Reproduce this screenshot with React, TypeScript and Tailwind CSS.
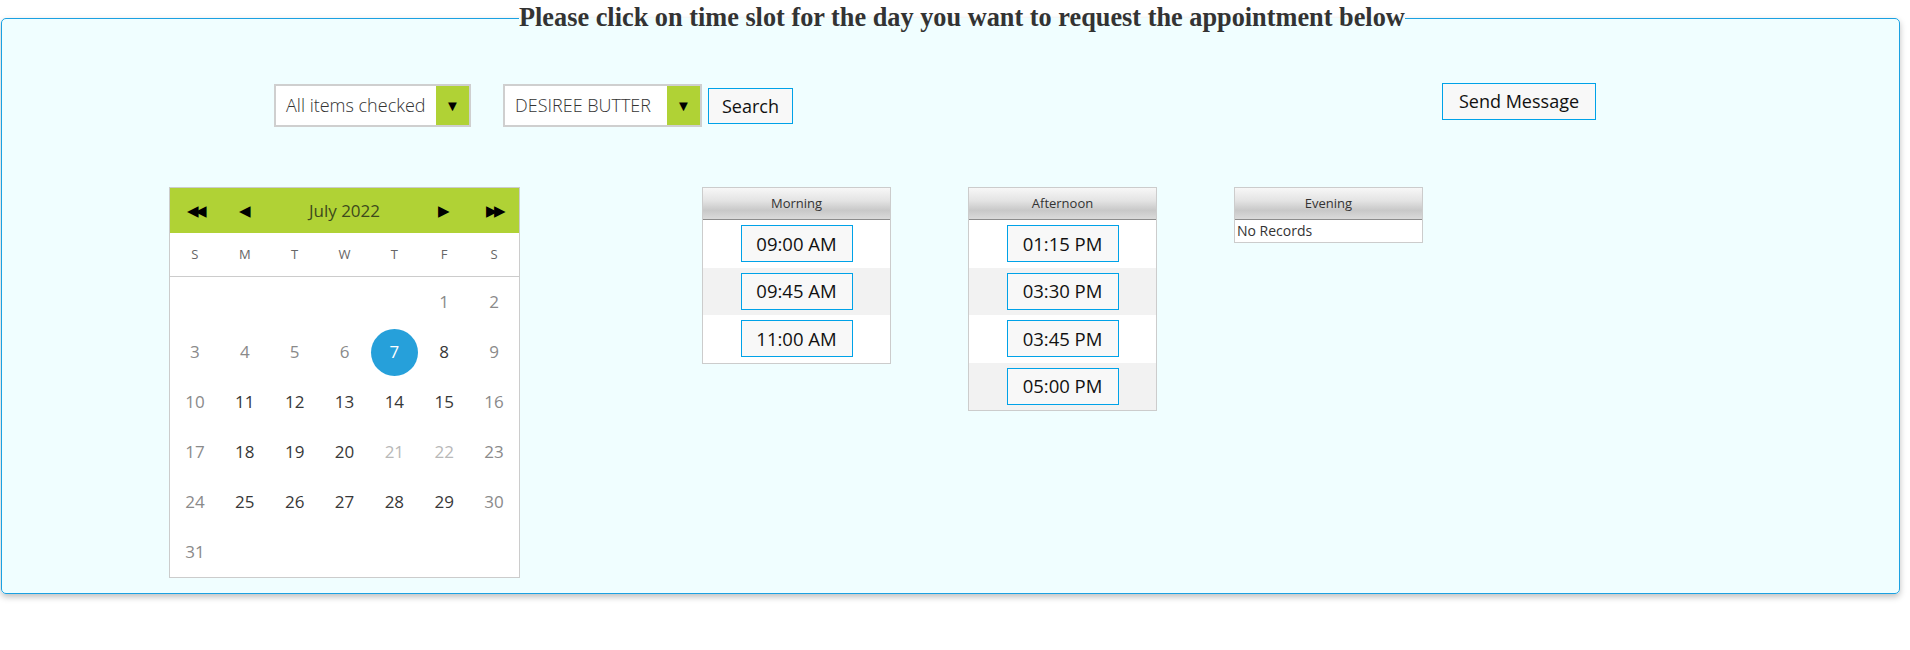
import React from 'react';

const days: (number | null)[] = [
  null, null, null, null, null, 1, 2,
  3, 4, 5, 6, 7, 8, 9,
  10, 11, 12, 13, 14, 15, 16,
  17, 18, 19, 20, 21, 22, 23,
  24, 25, 26, 27, 28, 29, 30,
  31, null, null, null, null, null, null,
];

const dayColor = (d: number, i: number) => {
  if (d === 21 || d === 22) return 'text-[#b8b8b8]';
  if (d < 7) return 'text-[#8a8a8a]';
  const col = i % 7;
  if (col === 0 || col === 6) return 'text-[#8a8a8a]';
  return 'text-[#383838]';
};

const Dropdown = ({ label, width }: { label: string; width: string }) => (
  <div className={`flex h-[43px] border-2 border-[#cfcfcf] bg-white ${width}`}>
    <div className="flex flex-1 items-center pl-[10px] text-[18px] font-light text-[#333] whitespace-nowrap overflow-hidden">
      {label}
    </div>
    <div className="flex w-[33px] items-center justify-center bg-[#b0d235] text-[15px] text-black">▼</div>
  </div>
);

const SlotTable = ({ title, slots }: { title: string; slots: string[] }) => (
  <div className="w-[189px] border border-[#cccccc] bg-white">
    <div className="flex h-[32px] items-center justify-center border-b border-[#8c8c8c] bg-[linear-gradient(to_bottom,#f7f7f7_0%,#e4e4e4_40%,#c8c8c8_72%,#dadada_100%)] text-[13px] text-[#333]">
      {title}
    </div>
    {slots.length === 0 ? (
      <div className="h-[22px] px-[2px] text-[14px] leading-[22px] text-[#333]">No Records</div>
    ) : (
      slots.map((s, i) => (
        <div
          key={s}
          className={`flex h-[47.5px] items-center justify-center ${i % 2 === 1 ? 'bg-[#f2f2f2]' : 'bg-white'}`}
        >
          <button className="h-[37px] w-[112px] border border-[#00a2e8] bg-[#f8f8f8] text-[18.5px] text-[#111]">
            {s}
          </button>
        </div>
      ))
    )}
  </div>
);

export default function App() {
  return (
    <div className="h-[650px] w-[1910px] bg-white font-['Open_Sans',sans-serif]">
      <fieldset className="ml-[1px] w-[1899px] rounded-[5px] border border-[#1ba1e2] bg-[#f0feff] pb-[15px] shadow-[0_3px_6px_rgba(0,0,0,0.25)]">
        <legend className="ml-[517px] px-0 font-['Liberation_Serif',serif] text-[26.3px] font-bold leading-[36px] text-[#333]">
          Please click on time slot for the day you want to request the appointment below
        </legend>

        <div className="flex items-start pl-[272px] pt-[48px]">
          <Dropdown label="All items checked" width="w-[197px]" />
          <div className="ml-[32px]">
            <Dropdown label="DESIREE BUTTER" width="w-[199px]" />
          </div>
          <button className="ml-[6px] mt-[4px] h-[36px] w-[85px] border border-[#00a2e8] bg-[#f8f8f8] text-[18px] text-[#111]">
            Search
          </button>
          <button className="ml-[649px] -mt-[1px] h-[37px] w-[154px] border border-[#00a2e8] bg-[#f8f8f8] text-[18px] text-[#111]">
            Send Message
          </button>
        </div>

        <div className="flex items-start pl-[167px] pt-[60px]">
          <div className="w-[351px] border border-[#cccccc] bg-white">
            <div className="grid h-[45px] grid-cols-7 items-center bg-[#b0d235] text-black">
              <span className="text-center text-[15px] tracking-[-4px]">◀◀</span>
              <span className="text-center text-[15px]">◀</span>
              <span className="col-span-3 text-center text-[17px] text-[#3d4a1c]">July 2022</span>
              <span className="text-center text-[15px]">▶</span>
              <span className="text-center text-[15px] tracking-[-4px]">▶▶</span>
            </div>
            <div className="grid h-[44px] grid-cols-7 items-center border-b border-[#cccccc] text-[13px] text-[#666]">
              {['S', 'M', 'T', 'W', 'T', 'F', 'S'].map((d, i) => (
                <span key={i} className="text-center">
                  {d}
                </span>
              ))}
            </div>
            <div className="grid grid-cols-7">
              {days.map((d, i) => (
                <div key={i} className="flex h-[50px] items-center justify-center text-[17px]">
                  {d === 7 ? (
                    <span className="flex h-[47px] w-[47px] items-center justify-center rounded-full bg-[#26a0da] text-white">
                      7
                    </span>
                  ) : d ? (
                    <span className={dayColor(d, i)}>{d}</span>
                  ) : null}
                </div>
              ))}
            </div>
          </div>

          <div className="ml-[182px] flex items-start gap-[77px]">
            <SlotTable title="Morning" slots={['09:00 AM', '09:45 AM', '11:00 AM']} />
            <SlotTable title="Afternoon" slots={['01:15 PM', '03:30 PM', '03:45 PM', '05:00 PM']} />
            <SlotTable title="Evening" slots={[]} />
          </div>
        </div>
      </fieldset>
    </div>
  );
}
